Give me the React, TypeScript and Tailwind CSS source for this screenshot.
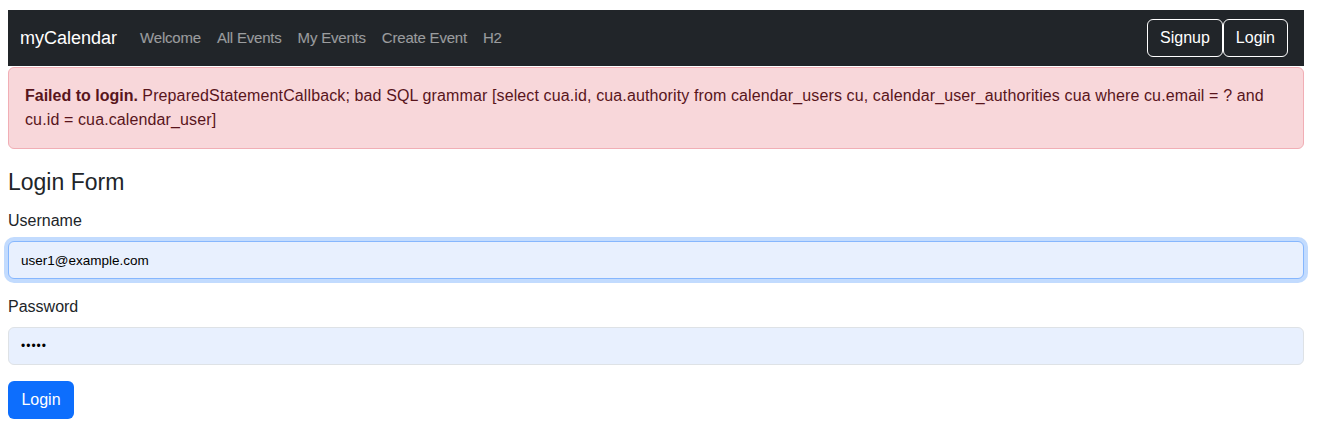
import { useState } from "react";

const navLinks = ["Welcome", "All Events", "My Events", "Create Event", "H2"];

export default function App() {
  const [username, setUsername] = useState("user1@example.com");
  const [password, setPassword] = useState("12345");

  return (
    <div className="w-[1296px] ml-2 pt-[10px] text-[#212529] font-['Liberation_Sans',Arial,sans-serif]">
      {/* Navbar */}
      <nav className="h-14 bg-[#212529] flex items-center pl-3 pr-4">
        <a className="text-white text-[18px] mr-[15px]">myCalendar</a>
        <ul className="flex">
          {navLinks.map((link) => (
            <li key={link}>
              <a className="block px-2 text-[15px] tracking-[-0.2px] text-white/55">{link}</a>
            </li>
          ))}
        </ul>
        <div className="ml-auto flex">
          <button className="h-[38px] px-3 text-white text-base border border-white rounded-md">
            Signup
          </button>
          <button className="h-[38px] px-3 text-white text-base border border-white rounded-md">
            Login
          </button>
        </div>
      </nav>

      {/* Error alert */}
      <div className="mt-px bg-[#f8d7da] border border-[#f1aeb5] rounded-md p-4 text-[#58151c] text-base leading-6">
        <strong>Failed to login.</strong>{" "}
        <span className="tracking-[0.12px]">
          PreparedStatementCallback; bad SQL grammar [select cua.id, cua.authority from
          calendar_users cu, calendar_user_authorities cua where cu.email = ? and cu.id =
          cua.calendar_user]
        </span>
      </div>

      {/* Login form */}
      <h4 className="mt-[19px] mb-3 text-[23px] leading-[29px]">Login Form</h4>
      <form onSubmit={(e) => e.preventDefault()}>
        <div className="mb-4">
          <label className="block mb-2 text-base leading-6">Username</label>
          <input
            value={username}
            onChange={(e) => setUsername(e.target.value)}
            className="block w-full h-[38px] px-3 text-[13.5px] text-black bg-[#e8f0fe] border border-[#86b7fe] rounded-md outline-none shadow-[0_0_0_4px_rgba(13,110,253,0.25)]"
          />
        </div>
        <div className="mb-4">
          <label className="block mb-2 text-base leading-6">Password</label>
          <input
            type="password"
            value={password}
            onChange={(e) => setPassword(e.target.value)}
            className="block w-full h-[38px] px-3 text-[12px] tracking-[1px] text-black bg-[#e8f0fe] border border-[#dee2e6] rounded-md outline-none"
          />
        </div>
        <button className="h-[38px] w-[66px] bg-[#0d6efd] text-white text-base rounded-md">
          Login
        </button>
      </form>
    </div>
  );
}
